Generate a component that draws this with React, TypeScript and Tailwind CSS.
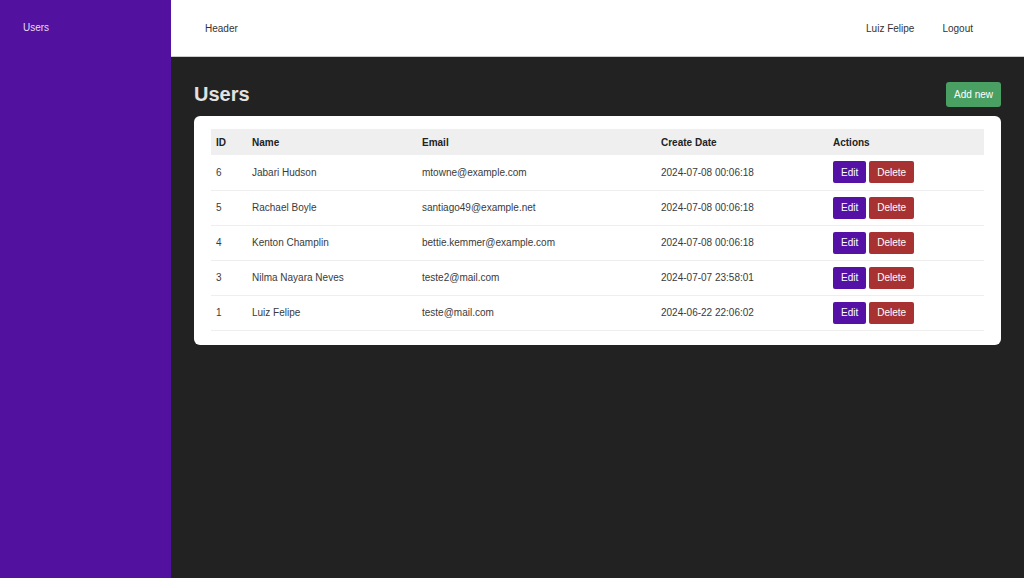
import { FC } from 'react';

interface User {
  id: number;
  name: string;
  email: string;
  createdAt: string;
}

const users: User[] = [
  { id: 6, name: 'Jabari Hudson', email: 'mtowne@example.com', createdAt: '2024-07-08 00:06:18' },
  { id: 5, name: 'Rachael Boyle', email: 'santiago49@example.net', createdAt: '2024-07-08 00:06:18' },
  { id: 4, name: 'Kenton Champlin', email: 'bettie.kemmer@example.com', createdAt: '2024-07-08 00:06:18' },
  { id: 3, name: 'Nilma Nayara Neves', email: 'teste2@mail.com', createdAt: '2024-07-07 23:58:01' },
  { id: 1, name: 'Luiz Felipe', email: 'teste@mail.com', createdAt: '2024-06-22 22:06:02' },
];

const App: FC = () => {
  return (
    <div
      className="flex h-[578px] w-full overflow-hidden text-[10px]"
      style={{ fontFamily: '"Liberation Sans", Arial, sans-serif' }}
    >
      <aside className="w-[171px] shrink-0 bg-[#52119e] px-[23px] pt-[20px] text-[#e6dcf5]">
        <a href="#" className="block">
          Users
        </a>
      </aside>
      <div className="flex flex-1 flex-col bg-[#222222]">
        <header className="flex h-[57px] shrink-0 items-center justify-between border-b border-[#cccccc] bg-white pl-[34px] pr-[51px] text-[#333333]">
          <span>Header</span>
          <nav className="flex gap-[28px]">
            <a href="#">Luiz Felipe</a>
            <a href="#">Logout</a>
          </nav>
        </header>
        <main className="flex-1 px-[23px] pt-[23px]">
          <div className="flex h-[28px] items-center justify-between">
            <h1 className="text-[20px] font-bold text-[#e2e2e2]">Users</h1>
            <button className="h-[25px] rounded-[3px] bg-[#4a9f63] px-[8px] text-[10px] text-white">Add new</button>
          </div>
          <div className="mt-[8px] rounded-[6px] bg-white px-[17px] pb-[14px] pt-[13px]">
            <table className="w-full border-collapse text-left text-[#3a3a3a]">
              <thead>
                <tr className="h-[26px] bg-[#efefef] font-bold text-[#222222]">
                  <th className="w-[35px] pl-[5px]">ID</th>
                  <th className="w-[170px] pl-[6px]">Name</th>
                  <th className="w-[239px] pl-[6px]">Email</th>
                  <th className="w-[172px] pl-[6px]">Create Date</th>
                  <th className="pl-[6px]">Actions</th>
                </tr>
              </thead>
              <tbody>
                {users.map((user) => (
                  <tr key={user.id} className="h-[35px] border-b border-[#eeeeee]">
                    <td className="pl-[5px]">{user.id}</td>
                    <td className="pl-[6px]">{user.name}</td>
                    <td className="pl-[6px]">{user.email}</td>
                    <td className="pl-[6px]">{user.createdAt}</td>
                    <td className="pl-[6px]">
                      <div className="flex gap-[3px]">
                        <button className="h-[22px] rounded-[2px] bg-[#5511a6] px-[8px] text-white">Edit</button>
                        <button className="h-[22px] rounded-[2px] bg-[#a83232] px-[8px] text-white">Delete</button>
                      </div>
                    </td>
                  </tr>
                ))}
              </tbody>
            </table>
          </div>
        </main>
      </div>
    </div>
  );
};

export default App;
